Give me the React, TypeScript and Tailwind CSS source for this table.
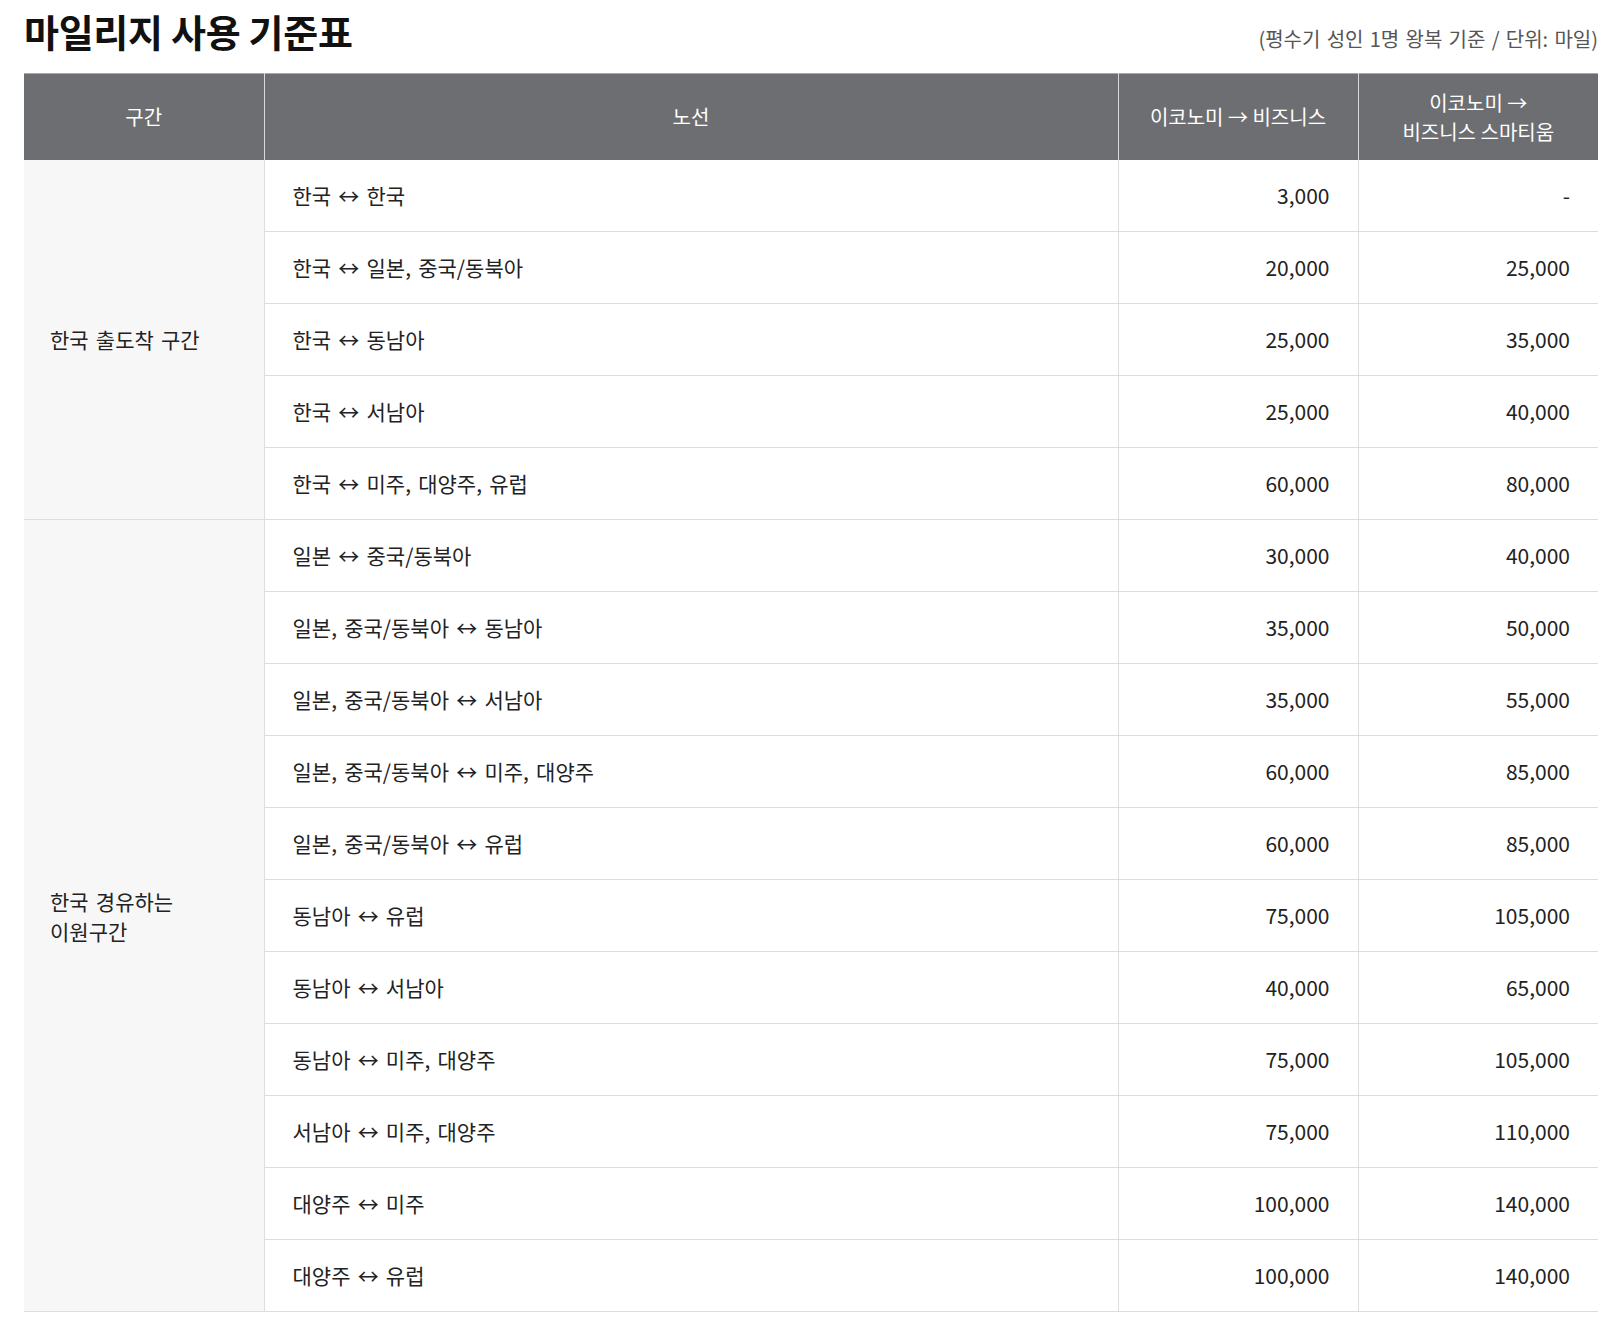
import React from "react";

type Row = { route: string; biz: string; prestige: string };

const group1: Row[] = [
  { route: "한국 ↔ 한국", biz: "3,000", prestige: "-" },
  { route: "한국 ↔ 일본, 중국/동북아", biz: "20,000", prestige: "25,000" },
  { route: "한국 ↔ 동남아", biz: "25,000", prestige: "35,000" },
  { route: "한국 ↔ 서남아", biz: "25,000", prestige: "40,000" },
  { route: "한국 ↔ 미주, 대양주, 유럽", biz: "60,000", prestige: "80,000" },
];

const group2: Row[] = [
  { route: "일본 ↔ 중국/동북아", biz: "30,000", prestige: "40,000" },
  { route: "일본, 중국/동북아 ↔ 동남아", biz: "35,000", prestige: "50,000" },
  { route: "일본, 중국/동북아 ↔ 서남아", biz: "35,000", prestige: "55,000" },
  { route: "일본, 중국/동북아 ↔ 미주, 대양주", biz: "60,000", prestige: "85,000" },
  { route: "일본, 중국/동북아 ↔ 유럽", biz: "60,000", prestige: "85,000" },
  { route: "동남아 ↔ 유럽", biz: "75,000", prestige: "105,000" },
  { route: "동남아 ↔ 서남아", biz: "40,000", prestige: "65,000" },
  { route: "동남아 ↔ 미주, 대양주", biz: "75,000", prestige: "105,000" },
  { route: "서남아 ↔ 미주, 대양주", biz: "75,000", prestige: "110,000" },
  { route: "대양주 ↔ 미주", biz: "100,000", prestige: "140,000" },
  { route: "대양주 ↔ 유럽", biz: "100,000", prestige: "140,000" },
];

function Group({ label, rows }: { label: React.ReactNode; rows: Row[] }) {
  return (
    <>
      {rows.map((r, i) => (
        <tr key={i} className="h-[72px] border-b border-[#dddddd]">
          {i === 0 && (
            <td
              rowSpan={rows.length}
              className="bg-[#f7f7f7] border-r border-[#dddddd] pl-[26px] pr-4 align-middle text-left leading-[30px]"
            >
              {label}
            </td>
          )}
          <td className="border-r border-[#dddddd] pl-[28px] text-left">{r.route}</td>
          <td className="border-r border-[#dddddd] pr-[28px] text-right">{r.biz}</td>
          <td className="pr-[28px] text-right">{r.prestige}</td>
        </tr>
      ))}
    </>
  );
}

export default function App() {
  return (
    <div
      className="bg-white pl-[24px] pr-[14px] text-[#222222]"
      style={{ fontFamily: '"Noto Sans CJK KR", "Noto Sans", sans-serif' }}
    >
      <div className="flex items-start justify-between h-[73px]">
        <h1 className="mt-[12px] text-[38px] font-bold leading-[38px] tracking-[-0.3px] text-[#111111]">마일리지 사용 기준표</h1>
        <span className="mt-[29px] text-[20px] leading-[20px] text-[#555555] [word-spacing:1.8px]">(평수기 성인 1명 왕복 기준 / 단위: 마일)</span>
      </div>
      <table className="w-[1574px] border-collapse table-fixed text-[21px]">
        <colgroup>
          <col className="w-[240px]" />
          <col className="w-[854px]" />
          <col className="w-[240px]" />
          <col className="w-[240px]" />
        </colgroup>
        <thead>
          <tr className="h-[86px] bg-[#6d6e71] text-white text-[20px] border-t border-[#a8a9ab]">
            <th className="font-normal border-r border-[#d9d9d9]">구간</th>
            <th className="font-normal border-r border-[#d9d9d9]">노선</th>
            <th className="font-normal border-r border-[#d9d9d9]">이코노미 → 비즈니스</th>
            <th className="font-normal leading-[29px]">
              이코노미 →<br />비즈니스 스마티움
            </th>
          </tr>
        </thead>
        <tbody className="[word-spacing:2.5px]">
          <Group label="한국 출도착 구간" rows={group1} />
          <Group
            label={
              <>
                한국 경유하는
                <br />
                이원구간
              </>
            }
            rows={group2}
          />
        </tbody>
      </table>
    </div>
  );
}
